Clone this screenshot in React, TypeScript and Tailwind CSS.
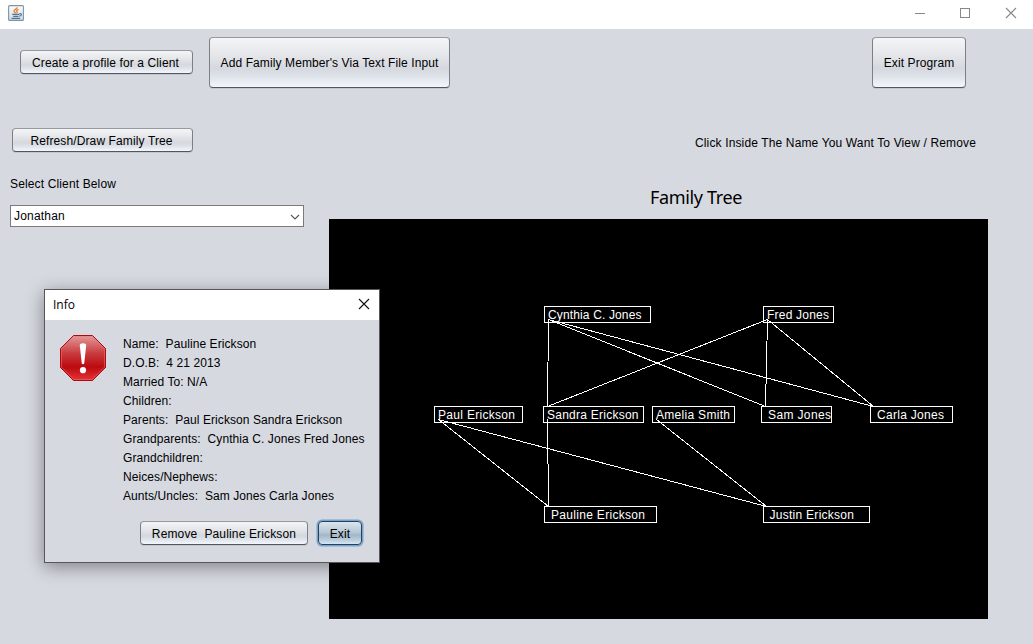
import React from "react";

type Person = { name: string; x: number; y: number; w: number; textX: number; textW: number };

// Coordinates are relative to the top-left corner of the black canvas.
const people: Person[] = [
  { name: "Cynthia C. Jones", x: 215, y: 87, w: 107, textX: 219, textW: 93.5 },
  { name: "Fred Jones", x: 434, y: 87, w: 71, textX: 438, textW: 62 },
  { name: "Paul Erickson", x: 105, y: 187, w: 89, textX: 109, textW: 77 },
  { name: "Sandra Erickson", x: 214, y: 187, w: 101, textX: 218, textW: 91.5 },
  { name: "Amelia Smith", x: 323, y: 187, w: 83, textX: 327, textW: 74 },
  { name: "Sam Jones", x: 432, y: 187, w: 71, textX: 439, textW: 63 },
  { name: "Carla Jones", x: 541, y: 187, w: 83, textX: 548, textW: 67 },
  { name: "Pauline Erickson", x: 215, y: 287, w: 113, textX: 222, textW: 94 },
  { name: "Justin Erickson", x: 434, y: 287, w: 107, textX: 440.5, textW: 84.5 },
];

const edges = [
  [219, 100, 218, 187],
  [219, 100, 436, 187],
  [219, 100, 544, 187],
  [438, 100, 218, 187],
  [438, 100, 436, 187],
  [438, 100, 544, 187],
  [109, 200, 219, 287],
  [109, 200, 437, 287],
  [218, 200, 219, 287],
  [327, 200, 437, 287],
];

const details = [
  "Name:  Pauline Erickson",
  "D.O.B:  4 21 2013",
  "Married To: N/A",
  "Children:",
  "Parents:  Paul Erickson Sandra Erickson",
  "Grandparents:  Cynthia C. Jones Fred Jones",
  "Grandchildren:",
  "Neices/Nephews:",
  "Aunts/Uncles:  Sam Jones Carla Jones",
];

function SwingButton({ children, className = "" }: { children: React.ReactNode; className?: string }) {
  return (
    <button
      className={`shrink-0 whitespace-pre rounded-[4px] border border-[#7d7f84] border-t-[#96999e] border-b-[#53565c] bg-[linear-gradient(to_bottom,#f4f5f7_0%,#e4e6e9_35%,#d5d8df_62%,#dce0e7_76%,#f3f7fd_100%)] text-black shadow-[0_1px_0_#c3c6cd] ${className}`}
    >
      {children}
    </button>
  );
}

function JavaIcon() {
  return (
    <svg width="16" height="16" viewBox="0 0 16 16" fill="none">
      <defs>
        <linearGradient id="jbg" x1="0" y1="0" x2="0" y2="1">
          <stop offset="0" stopColor="#fdfdfd" />
          <stop offset="1" stopColor="#cfdae3" />
        </linearGradient>
      </defs>
      <rect x=".6" y=".6" width="14.8" height="14.8" rx="1" fill="url(#jbg)" stroke="#7d95a8" strokeWidth="1.1" />
      <path d="M9 2.2c.7 1.7-3.6 2.6-3 4.2.2.8 1.1 1.2 1.6 1.9M10.5 4.3c-1.8.8-2.4 1.4-1.6 2.3.4.5.3 1-.4 1.4" stroke="#ed7d25" strokeWidth="1.3" />
      <path d="M4.2 9.4h7M5.2 11.4h5.3M11.4 8.7c2.9-.5 2.4 2-.1 2.5M3.5 13.4h8.6" stroke="#4d7698" strokeWidth="1.2" />
    </svg>
  );
}

function StopIcon() {
  return (
    <svg className="mt-px" width="48" height="48" viewBox="0 0 48 48">
      <defs>
        <linearGradient id="red" x1="0" y1="0" x2="0" y2="1">
          <stop offset="0" stopColor="#e39a9b" />
          <stop offset=".4" stopColor="#c93a3d" />
          <stop offset=".7" stopColor="#bb0b10" />
          <stop offset="1" stopColor="#e63338" />
        </linearGradient>
      </defs>
      <path d="M14.5 1.5h19L46.5 14.5v19L33.5 46.5h-19L1.5 33.5v-19z" fill="url(#red)" stroke="#b0080d" />
      <path d="M14.9 2.5h18.2L45.5 14.9v18.2L33.1 45.5H14.9L2.5 33.1V14.9z" fill="none" stroke="#e9797c" strokeOpacity=".5" />
      <path d="M20.8 11.5q0-2.2 3.2-2.2t3.2 2.2l-2 18q-1.2 1.5-2.4 0z" fill="#fff" />
      <circle cx="24" cy="36.2" r="3.1" fill="#fff" />
    </svg>
  );
}

function FamilyCanvas() {
  return (
    <div className="relative h-[400px] w-[659px] bg-black text-white">
      <svg className="absolute inset-0" width="659" height="400" shapeRendering="crispEdges">
        {edges.map(([x1, y1, x2, y2], i) => (
          <line key={i} x1={x1 + 0.5} y1={y1 + 0.5} x2={x2 + 0.5} y2={y2 + 0.5} stroke="#fff" />
        ))}
      </svg>
      {people.map((p) => (
        <div key={p.name} className="absolute h-[17px] border border-white" style={{ left: p.x, top: p.y, width: p.w }}>
          <svg className="absolute -top-px left-0 overflow-visible" width={p.w} height="17">
            <text x={p.textX - p.x - 1} y="13" textLength={p.textW} fill="#fff" className="text-[12px]">
              {p.name}
            </text>
          </svg>
        </div>
      ))}
    </div>
  );
}

function InfoDialog() {
  return (
    <div className="absolute left-[44px] top-[289px] flex h-[274px] w-[336px] flex-col border border-[#55575c] bg-[#d6d9e0] shadow-[0_4px_17px_0_rgba(0,0,0,0.4)]">
      <div className="flex h-[30px] shrink-0 items-center justify-between bg-white pr-[9px] pl-2">
        <span className="font-['Open_Sans'] text-[12px]">Info</span>
        <svg className="mb-[2px]" width="12" height="12" viewBox="0 0 12 12" stroke="#111" strokeWidth="1.1">
          <path d="M1 1l10 10M11 1L1 11" />
        </svg>
      </div>
      <div className="flex pt-[13px] pl-[14px]">
        <StopIcon />
        <div className="pl-4 tracking-[0.08px]">
          {details.map((d) => (
            <p key={d} className="h-[19px] whitespace-pre leading-[23px]">
              {d}
            </p>
          ))}
        </div>
      </div>
      <div className="flex gap-[10px] pt-[17px] pl-[95px]">
        <SwingButton className="h-[24px] w-[168px] pt-px tracking-[0.15px]">Remove  Pauline Erickson</SwingButton>
        <button className="h-[24px] w-[44px] rounded-[4px] border border-[#26415c] bg-[linear-gradient(to_bottom,#dce5ec_0%,#b9c9d6_45%,#a2b7c8_60%,#b9ccdb_80%,#d5e6f3_100%)] pt-px tracking-[0.15px] shadow-[0_0_0_1.5px_#75a4d0]">
          Exit
        </button>
      </div>
    </div>
  );
}

export default function App() {
  return (
    <div className="relative flex h-[644px] w-[1033px] flex-col overflow-hidden bg-[#d6d9e0] font-['Liberation_Sans',Arial,sans-serif] text-[12px] text-black">
      <header className="flex h-[29px] shrink-0 items-start justify-between bg-white pt-[5px] pr-[16px] pl-2">
        <JavaIcon />
        <div className="flex gap-[34px] pt-[2px]">
          <svg width="12" height="12" stroke="#888" shapeRendering="crispEdges"><path d="M2 6.5h10" /></svg>
          <svg width="12" height="12" stroke="#888" fill="none" shapeRendering="crispEdges"><path d="M1.5 1.5h9v9h-9z" /></svg>
          <svg width="12" height="12" stroke="#888" strokeWidth="1.1"><path d="M1 1l10 10M11 1L1 11" /></svg>
        </div>
      </header>

      <div className="flex h-[99px] items-start pt-2 pl-5">
        <SwingButton className="mt-[13px] h-[24px] w-[173px] pt-px pr-[2px] tracking-[0.12px]">Create a profile for a Client</SwingButton>
        <SwingButton className="ml-4 h-[51px] w-[241px] tracking-[0.1px]">Add Family Member's Via Text File Input</SwingButton>
        <SwingButton className="ml-[422px] h-[51px] w-[94px] tracking-[0.1px]">Exit Program</SwingButton>
      </div>

      <div className="flex">
        <aside className="flex w-[329px] flex-col items-start pl-[10px]">
          <SwingButton className="ml-[2px] h-[24px] w-[181px] pt-px pr-[2px] tracking-[0.12px]">Refresh/Draw Family Tree</SwingButton>
          <label className="mt-[24px] leading-4 tracking-[0.14px]">Select Client Below</label>
          <div className="mt-[13px] flex h-[22px] w-[294px] items-center justify-between border border-[#7a7a7a] bg-white pr-[3px] pl-[3px]">
            <span className="tracking-[0.2px]">Jonathan</span>
            <svg className="mt-px" width="10" height="6" viewBox="0 0 10 6" fill="none" stroke="#555" strokeWidth="1.1"><path d="M1 1l4 4 4-4" /></svg>
          </div>
        </aside>
        <main className="w-[659px]">
          <p className="h-[56px] pt-[7px] pl-[366px] leading-4 tracking-[0.14px] whitespace-nowrap">Click Inside The Name You Want To View / Remove</p>
          <h1 className="h-[35px] pl-[321px] font-['Noto_Sans'] text-[18px] leading-[27px] tracking-[-0.35px]">Family Tree</h1>
          <FamilyCanvas />
        </main>
      </div>

      <InfoDialog />
    </div>
  );
}
